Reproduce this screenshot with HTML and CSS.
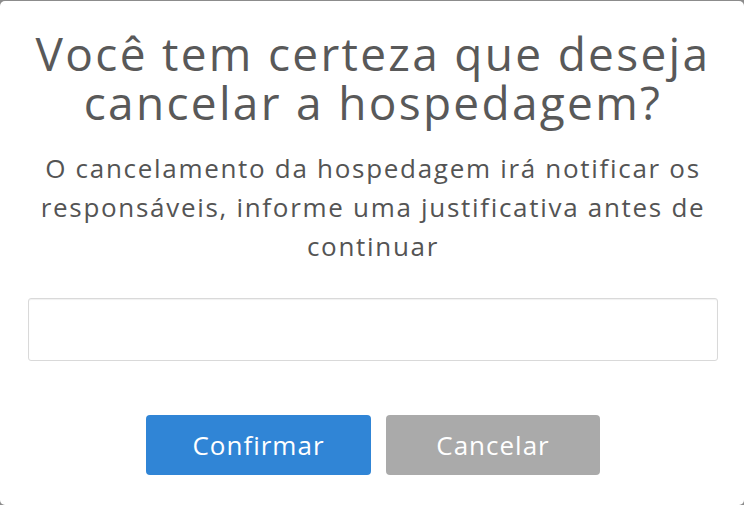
FILE: index.html
```html
<!DOCTYPE html>
<html lang="pt-BR">
<head>
<meta charset="utf-8">
<link rel="stylesheet" href="styles.css">
</head>
<body>
<div class="popup">
  <h2 class="title">Você tem certeza que deseja cancelar a hospedagem?</h2>
  <div class="text">O cancelamento da hospedagem irá notificar os responsáveis, informe uma justificativa antes de continuar</div>
  <input class="input" type="text">
  <div class="actions">
    <button class="btn btn-confirm">Confirmar</button>
    <button class="btn btn-cancel">Cancelar</button>
  </div>
</div>
</body>
</html>
```
FILE: styles.css
```css
html, body {
  margin: 0;
  height: 100%;
  overflow: hidden;
}
body {
  background: #8c8c8c;
  font-family: "Open Sans", "Noto Sans", sans-serif;
}
.popup {
  box-sizing: border-box;
  margin-top: 1px;
  height: 504px;
  background: #fff;
  border-radius: 5px;
  display: flex;
  flex-direction: column;
  align-items: center;
  padding: 28px 19px 0 21px;
}
.title {
  margin: 0;
  font-size: 46px;
  font-weight: 400;
  line-height: 49px;
  color: #595959;
  text-align: center;
  letter-spacing: 2.3px;
}
.text {
  margin-top: 22px;
  width: 672px;
  font-size: 26px;
  line-height: 39px;
  color: #545454;
  text-align: center;
  letter-spacing: 1.7px;
}
.input {
  box-sizing: border-box;
  margin-top: 32px;
  width: 690px;
  height: 63px;
  border: 1px solid #d9d9d9;
  border-radius: 3px;
  box-shadow: inset 0 1px 1px rgba(0,0,0,0.06);
  outline: none;
}
.actions {
  margin-top: 54px;
  display: flex;
  gap: 15px;
}
.btn {
  height: 60px;
  border: none;
  border-radius: 4px;
  color: #fff;
  font-family: "Open Sans", "Noto Sans", sans-serif;
  font-size: 26px;
  letter-spacing: 1px;
}
.btn-confirm {
  width: 225px;
  background: #3085d6;
}
.btn-cancel {
  width: 214px;
  background: #aaaaaa;
}
```
